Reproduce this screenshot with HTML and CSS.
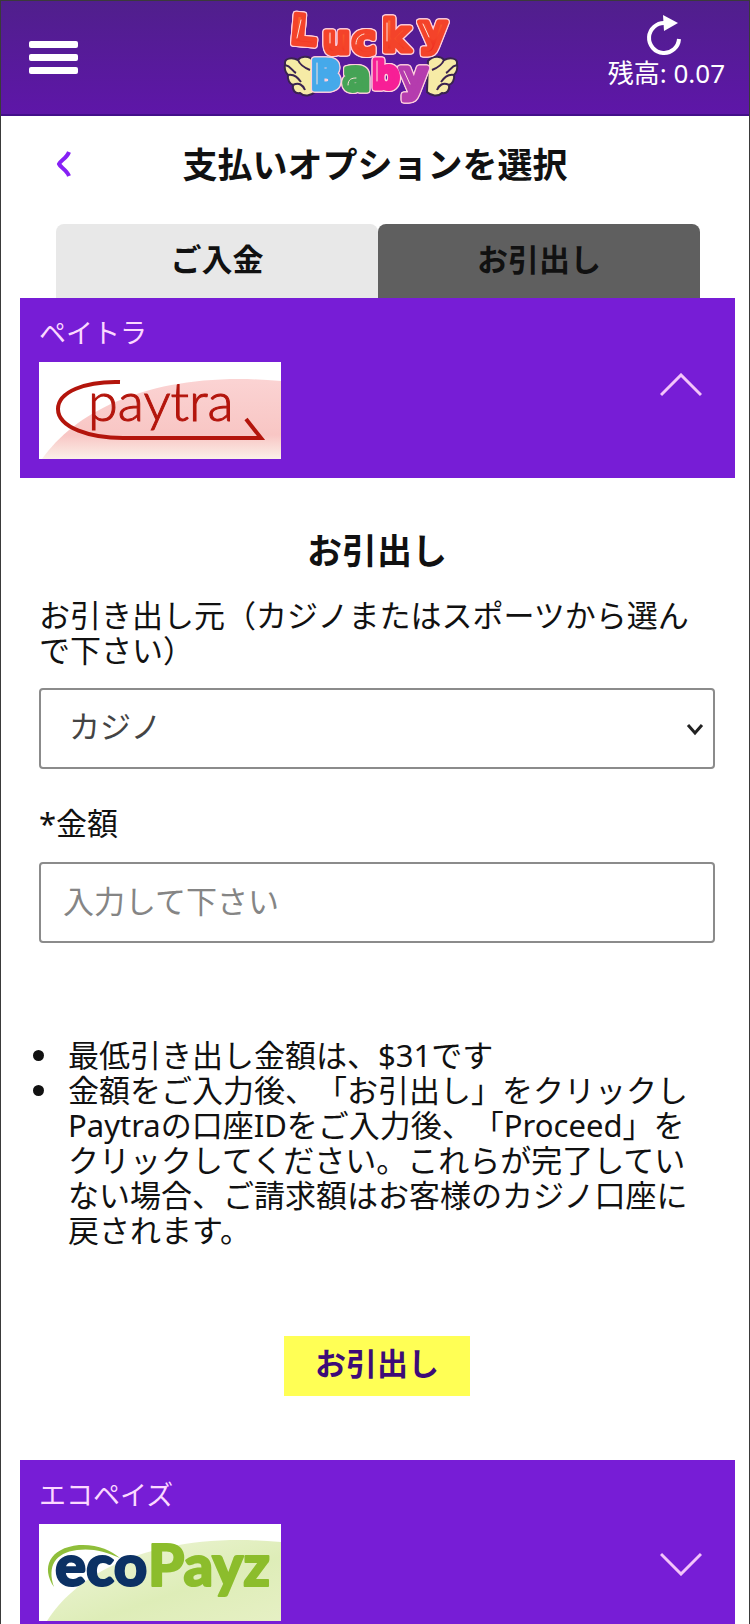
FILE: index.html
```html
<!DOCTYPE html>
<html lang="ja">

<head>
    <meta charset="UTF-8">
    <meta name="viewport" content="width=device-width, initial-scale=1.0">
    <title>Lucky Baby</title>
    <link rel="stylesheet" href="styles.css">
</head>

<body>
    <header class="topbar">
        <button type="button" class="menu-btn" aria-label="Menu">
            <span></span>
            <span></span>
            <span></span>
        </button>

        <a href="#" class="logo" aria-label="Lucky Baby">
            <svg width="176" height="94" viewBox="0 0 176 94">
                <defs>
                    <linearGradient id="red" x1="0" y1="0" x2="0" y2="1">
                        <stop offset="0" stop-color="#ff7a35"></stop>
                        <stop offset="1" stop-color="#ee2420"></stop>
                    </linearGradient>
                    <g id="wing">
                        <path d="M31 50 C25 43 17 46 15 49 C9 46 1 47 2 53 C1 58 3 62 5 64 C4 69 7 73 10 74 C9 79 12 83 17 82 C21 86 28 85 32 81 Z"></path>
                        <path d="M15 49 C17 54 22 57 27 59 M2 54 C8 55 9 60 13 62 M5 64 C12 63 15 67 18 71 M10 74 C16 71 20 74 22 79"></path>
                    </g>
                </defs>
                <g class="wing">
                    <use href="#wing"></use>
                    <use href="#wing" transform="matrix(-1 0 0 1 176 0)"></use>
                </g>
                <g class="logo-lucky">
                    <text x="8" y="33" font-size="40" transform="rotate(5 20 20)">L</text>
                    <text x="40" y="42" font-size="38">u</text>
                    <text x="69" y="43" font-size="40">c</text>
                    <text x="99" y="40" font-size="42">k</text>
                    <text x="136" y="34" font-size="43">y</text>
                </g>
                <g class="logo-baby">
                    <text x="28" y="78" font-size="39" class="blue">B</text>
                    <text x="60" y="79" font-size="40" class="green">a</text>
                    <text x="89" y="77" font-size="38" class="pink">b</text>
                    <text x="117" y="80" font-size="42" class="violet">y</text>
                </g>
                <path class="shine" d="M18 9 L14 27 M47 22 L47 32 M73 33 C73 28 76 24 81 23 M104 12 L104 30 M140 13 L146 26 M34 52 L34 73 M65 74 C65 68 69 67 73 67 M94 50 L94 70 M121 60 L127 73"></path>
            </svg>
        </a>

        <div class="balance">
            <button type="button" class="reload-btn" aria-label="更新">
                <svg width="36" height="42" viewBox="0 0 36 42">
                    <path d="M19 9 A15 15 0 1 0 33 25" fill="none" stroke="#fff" stroke-width="4"></path>
                    <path d="M17 1 L32 9 L18 17 Z" fill="#fff"></path>
                </svg>
            </button>
            <span>残高: 0.07</span>
        </div>
    </header>

    <main>
        <div class="page-title">
            <a href="#" class="back" aria-label="戻る">
                <svg width="16" height="28" viewBox="0 0 16 28">
                    <path d="M13 1 C11 7 4 10 3 13 C4 16 11 19 13 25" fill="none" stroke="#8620f5" stroke-width="4"></path>
                </svg>
            </a>
            <h1>支払いオプションを選択</h1>
        </div>

        <nav class="tabs">
            <button type="button" class="tab">ご入金</button>
            <button type="button" class="tab tab-active">お引出し</button>
        </nav>

        <button type="button" class="method">
            <span class="method-info">
                <span class="method-name">ペイトラ</span>
                <svg class="method-logo" width="242" height="97" viewBox="0 0 242 97" aria-hidden="true">
                    <defs>
                        <linearGradient id="hill-red" x1="0" y1="0" x2="0" y2="1">
                            <stop offset="0" stop-color="#fbd3d3"></stop>
                            <stop offset="0.7" stop-color="#f8c6c4"></stop>
                            <stop offset="1" stop-color="#fbf0e8"></stop>
                        </linearGradient>
                    </defs>
                    <rect width="242" height="97" fill="#fff"></rect>
                    <path d="M3 97 C40 45 120 8 242 19 V97 Z" fill="url(#hill-red)"></path>
                    <path d="M81 20 C46 19 19 30 19 47 C19 66 52 76 84 76 H222 L207 57" fill="none" stroke="#b3150c" stroke-width="4"></path>
                    <text x="49" y="59" class="paytra">paytra</text>
                </svg>
            </span>
            <svg class="chevron" width="42" height="24" viewBox="0 0 42 24">
                <path d="M1 22 L21 2 L41 22" fill="none" stroke="#f3c4fa" stroke-width="3"></path>
            </svg>
        </button>

        <form class="withdraw">
            <h2>お引出し</h2>

            <label for="source">お引き出し元（カジノまたはスポーツから選んで下さい）</label>
            <div class="select-box">
                <select id="source">
                    <option>カジノ</option>
                    <option>スポーツ</option>
                </select>
                <svg width="18" height="14" viewBox="0 0 18 14">
                    <path d="M2 3 L9 11 L16 3" fill="none" stroke="#222" stroke-width="3"></path>
                </svg>
            </div>

            <label for="amount">*金額</label>
            <input type="text" id="amount" placeholder="入力して下さい">

            <ul>
                <li>最低引き出し金額は、$31です</li>
                <li>金額をご入力後、「お引出し」をクリックしPaytraの口座IDをご入力後、「Proceed」をクリックしてください。これらが完了していない場合、ご請求額はお客様のカジノ口座に戻されます。</li>
            </ul>

            <button type="submit" class="submit-btn">お引出し</button>
        </form>

        <button type="button" class="method method-last">
            <span class="method-info">
                <span class="method-name">エコペイズ</span>
                <svg class="method-logo" width="242" height="97" viewBox="0 0 242 97" aria-hidden="true">
                    <defs>
                        <linearGradient id="hill-green" x1="0" y1="0" x2="1" y2="1">
                            <stop offset="0" stop-color="#f0f6dc"></stop>
                            <stop offset="0.6" stop-color="#deedb8"></stop>
                            <stop offset="1" stop-color="#e6f0c4"></stop>
                        </linearGradient>
                    </defs>
                    <rect width="242" height="97" fill="#fff"></rect>
                    <path d="M8 97 C36 52 110 6 242 18 V97 Z" fill="url(#hill-green)"></path>
                    <path d="M15 63 C2 44 10 24 40 21 C58 20 72 26 81 34 C66 27 52 24 38 26 C16 29 8 42 15 63 Z" fill="#8fbe3a"></path>
                    <text y="62" class="ecopayz"><tspan x="16" fill="#0c3164" stroke="#0c3164">eco</tspan><tspan x="109" fill="#8cbd2c" stroke="#8cbd2c">Payz</tspan></text>
                </svg>
            </span>
            <svg class="chevron" width="42" height="24" viewBox="0 0 42 24">
                <path d="M1 2 L21 22 L41 2" fill="none" stroke="#f3c4fa" stroke-width="3"></path>
            </svg>
        </button>
    </main>
</body>

</html>
```

FILE: styles.css
```css
* {
    box-sizing: border-box;
}

body {
    margin: 0;
    min-height: 100vh;
    border: 1px solid #3a3a3a;
    background-color: #fff;
    color: #111;
    font-family: "Noto Sans", "Noto Sans CJK JP", sans-serif;
    font-size: 31px;
    line-height: 35px;
    text-spacing-trim: space-all;
}

button, input, select {
    font-family: inherit;
    font-size: inherit;
    line-height: inherit;
    border: none;
    padding: 0;
}

button {
    background: none;
    cursor: pointer;
}

/* header */
.topbar {
    display: grid;
    grid-template-columns: 1fr auto 1fr;
    align-items: center;
    height: 115px;
    padding: 0 24px 0 28px;
    border-bottom: 2px solid #43108a;
    background: linear-gradient(#501f8c, #5e16a8);
    color: #fff;
}

.menu-btn {
    display: flex;
    flex-direction: column;
    gap: 6px;
    width: 49px;
}

.menu-btn span {
    height: 7px;
    border-radius: 2px;
    background-color: #fff;
}

.logo {
    margin-right: 12px;
}

.logo, .logo svg, .reload-btn svg {
    display: block;
    overflow: visible;
}

.balance {
    display: flex;
    flex-direction: column;
    align-items: flex-end;
    align-self: start;
    padding-top: 13px;
    font-size: 26px;
    line-height: 34px;
}

.reload-btn {
    margin-right: 43px;
}

.logo text {
    font-family: "DejaVu Sans", sans-serif;
    font-weight: bold;
}

.logo-lucky, .logo-baby {
    stroke-width: 5;
    stroke-linejoin: round;
    filter: drop-shadow(1px 0 #ffd0dc) drop-shadow(-1px 0 #ffd0dc) drop-shadow(0 1px #ffd0dc) drop-shadow(0 -1px #ffd0dc);
}

.logo-lucky {
    fill: url(#red);
    stroke: #f4432a;
}

.blue {
    fill: #45a9ea;
    stroke: #45a9ea;
}

.green {
    fill: #45a355;
    stroke: #45a355;
}

.pink {
    fill: #f71f96;
    stroke: #f71f96;
}

.violet {
    fill: #b53cae;
    stroke: #b53cae;
}

.wing {
    fill: #f6eba6;
    stroke: #3a2350;
    stroke-width: 2;
}

.shine {
    fill: none;
    stroke: #ffe3dc;
    stroke-width: 1;
    stroke-linecap: round;
}

/* title and tabs */
.page-title {
    display: grid;
    grid-template-columns: 70px 1fr 70px;
    align-items: center;
    padding: 24px 19px 0 19px;
}

.back {
    display: flex;
    justify-content: flex-end;
    padding-right: 18px;
}

h1, h2 {
    margin: 0;
    font-size: 35px;
    line-height: 50px;
    text-align: center;
}

.tabs {
    display: flex;
    margin: 34px 49px 0 55px;
}

.tab {
    flex: 1;
    height: 74px;
    padding-bottom: 4px;
    border-radius: 8px 8px 0 0;
    background-color: #e8e8e8;
    color: #111;
    font-weight: bold;
}

.tab-active {
    background-color: #5f5f5f;
}

/* payment method rows */
.method {
    display: flex;
    justify-content: space-between;
    align-items: center;
    width: calc(100% - 33px);
    margin: 0 14px 0 19px;
    padding: 17px 33px 19px 19px;
    background-color: #771dd6;
    color: #fbd9ff;
    text-align: left;
}

.method-info {
    display: flex;
    flex-direction: column;
    gap: 12px;
}

.method-name {
    font-size: 27px;
}

.method-logo {
    display: block;
}

.chevron {
    margin-bottom: 4px;
}

.method-last {
    padding-bottom: 3px;
}

.method-last .chevron {
    margin: 30px 0 0;
}

.paytra {
    font-family: Lato, sans-serif;
    font-size: 54px;
    font-weight: 300;
    fill: #b3150c;
    stroke: #b3150c;
}

.ecopayz {
    font-family: Lato, sans-serif;
    font-size: 58px;
    font-weight: 900;
    stroke-width: 2;
    stroke-linejoin: round;
}

/* withdrawal form */
.withdraw {
    display: flex;
    flex-direction: column;
    padding: 48px 34px 64px 38px;
}

.withdraw h2 {
    margin-bottom: 22px;
}

.select-box {
    position: relative;
    margin: 20px 0 37px;
}

.select-box svg {
    position: absolute;
    right: 11px;
    top: 34px;
}

select, input[type="text"] {
    display: block;
    width: 100%;
    height: 81px;
    border: 2px solid #8b8b8b;
    border-radius: 4px;
    background-color: #fff;
    color: #444;
}

select {
    appearance: none;
    padding: 0 40px 4px 28px;
}

input[type="text"] {
    margin-top: 21px;
    padding: 0 22px 4px;
}

input::placeholder {
    color: #858585;
}

ul {
    margin: 95px 0 88px;
    padding-left: 23px;
}

li {
    padding-left: 6px;
}

.submit-btn {
    align-self: center;
    width: 186px;
    height: 60px;
    padding-bottom: 6px;
    background-color: #ffff55;
    color: #3d0b78;
    font-weight: bold;
}
```
